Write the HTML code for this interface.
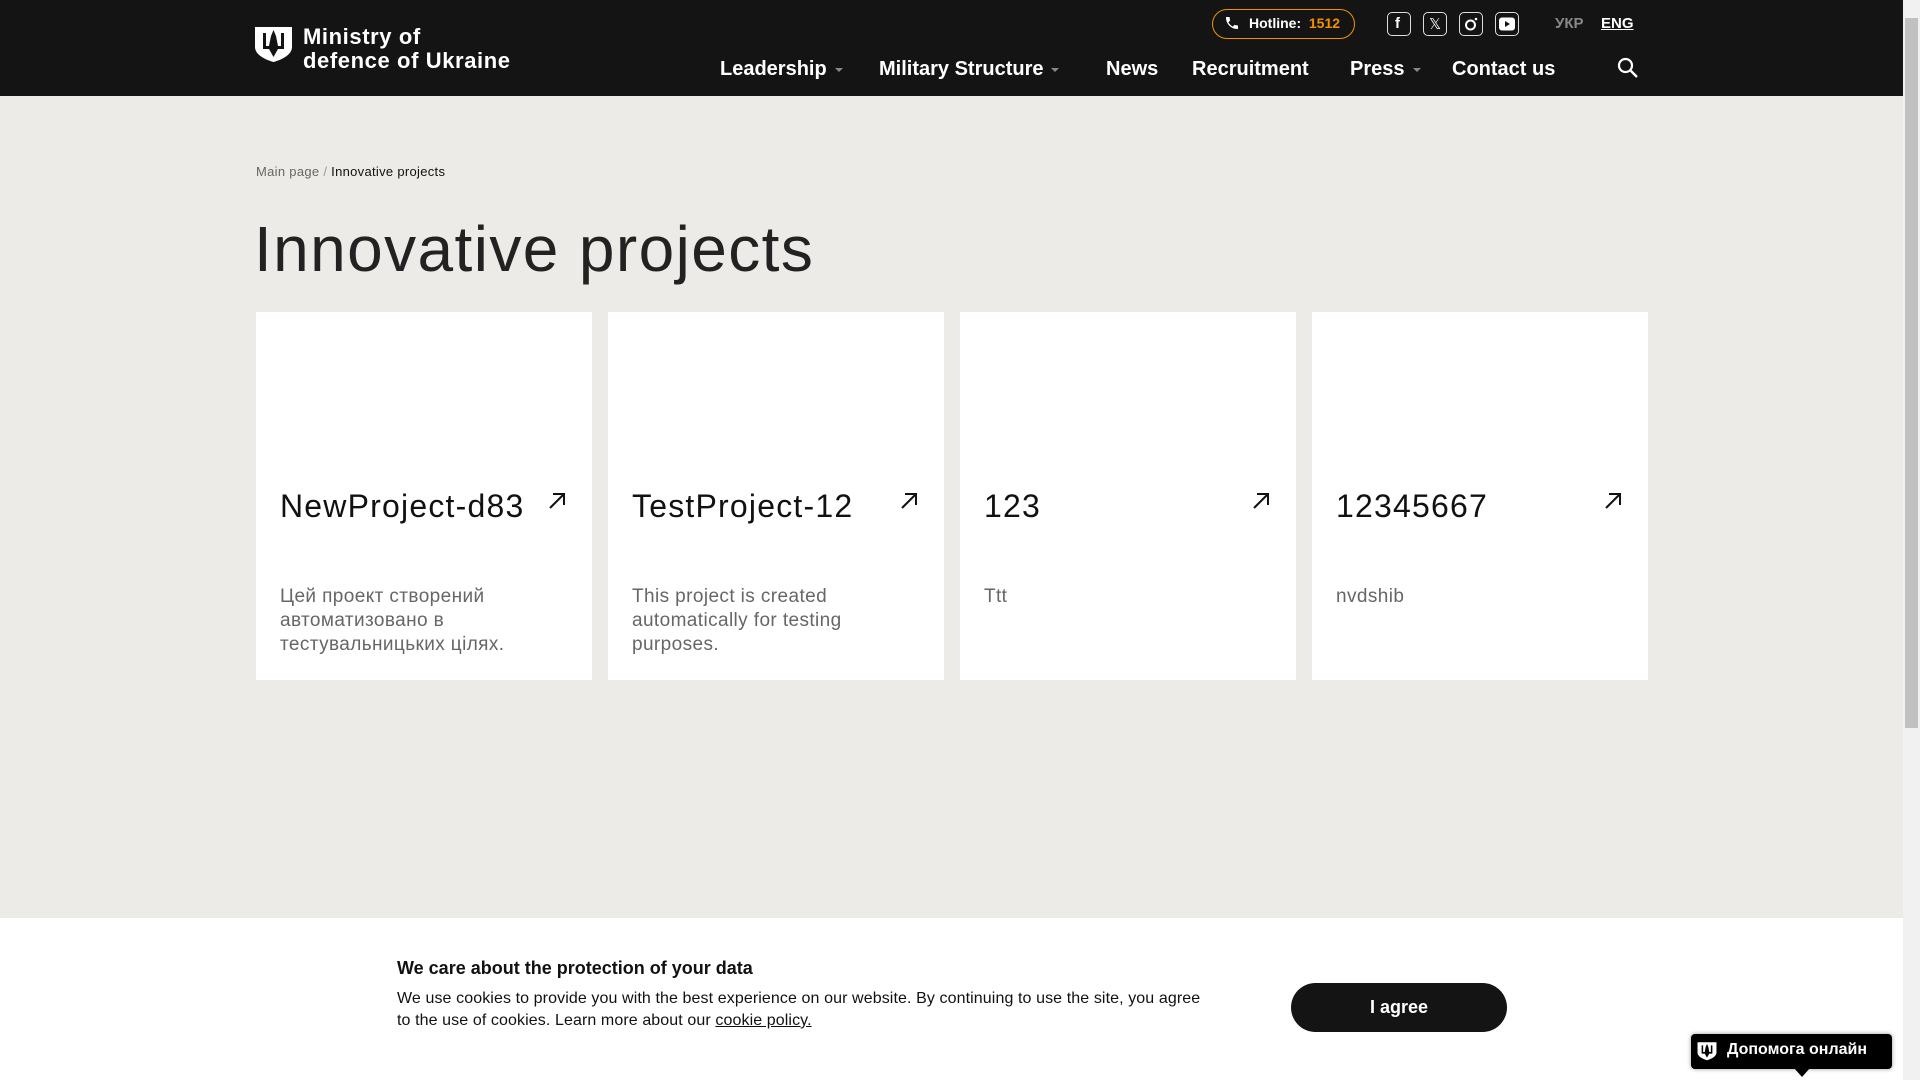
<!DOCTYPE html>
<html><head><meta charset="utf-8"><style>
*{margin:0;padding:0;box-sizing:border-box}
body{width:1920px;height:1080px;overflow:hidden;background:#edebe7;font-family:"Liberation Sans",sans-serif;position:relative;color:#1a1a1a}
.hdr{position:absolute;left:0;top:0;width:1903px;height:96px;background:#141414}
.abs{position:absolute}
.logo-t{left:303px;top:25px;color:#fff;font-weight:bold;font-size:22px;line-height:24px;letter-spacing:.6px}
.nav{top:58px;color:#fff;font-weight:bold;font-size:20px;white-space:nowrap}
.car{display:inline-block;width:0;height:0;border-left:4px solid transparent;border-right:4px solid transparent;border-top:4px solid #888;vertical-align:middle;margin-left:8px}
.pill{left:1212px;top:9px;width:143px;height:30px;border:1.5px solid #f29100;border-radius:15px;color:#fff;font-weight:bold;font-size:14px;line-height:27px;padding-left:36px}
.soc{top:12px;width:24px;height:24px;border:1.3px solid #ddd;border-radius:5px}
.card{top:312px;width:336px;height:368px;background:#fff}
.ct{position:absolute;left:24px;top:176px;font-size:32px;color:#111;letter-spacing:1.2px}
.cd{position:absolute;left:24px;top:273px;font-size:19px;line-height:24px;color:#666;width:300px;letter-spacing:.4px}
.arr{position:absolute;right:26px;top:180px}
.ck{left:0;top:918px;width:1903px;height:162px;background:#fff}
.sb{left:1903px;top:0;width:17px;height:1080px;background:#f1f1f1}
</style></head><body>
<div class="hdr"></div>
<svg class="abs" style="left:254px;top:26px" width="39" height="36" viewBox="0 0 39 36"><path d="M1 1H38V21C38 29 27 34 19.5 36C12 34 1 29 1 21Z" fill="#fff"/><path d="M9 7V23H15L19.5 31L24 23H30V7H27V20H24L22 10L19.5 4L17 10L15 20H12V7Z" fill="#141414"/></svg>
<div class="abs logo-t">Ministry of<br>defence of Ukraine</div>
<div class="abs nav" style="left:720px">Leadership<span class="car"></span></div>
<div class="abs nav" style="left:879px">Military Structure<span class="car"></span></div>
<div class="abs nav" style="left:1106px">News</div>
<div class="abs nav" style="left:1192px">Recruitment</div>
<div class="abs nav" style="left:1350px">Press<span class="car"></span></div>
<div class="abs nav" style="left:1452px">Contact us</div>
<svg class="abs" style="left:1617px;top:57px" width="22" height="22" viewBox="0 0 22 22"><circle cx="8.5" cy="8.5" r="6.5" stroke="#fff" stroke-width="2.2" fill="none"/><path d="M13 13L20 20" stroke="#fff" stroke-width="2.4"/></svg>
<div class="abs pill">Hotline:&nbsp; <span style="color:#f29100">1512</span></div>
<svg class="abs" style="left:1224px;top:15px" width="16" height="16" viewBox="0 0 24 24"><path d="M6.6 10.8c1.4 2.8 3.8 5.1 6.6 6.6l2.2-2.2c.3-.3.7-.4 1-.2 1.1.4 2.3.6 3.6.6.6 0 1 .4 1 1V20c0 .6-.4 1-1 1C10.6 21 3 13.4 3 4c0-.6.4-1 1-1h3.5c.6 0 1 .4 1 1 0 1.3.2 2.5.6 3.6.1.3 0 .7-.2 1z" fill="#fff"/></svg>
<div class="abs soc" style="left:1387px"><span style="position:absolute;left:7px;top:2px;color:#fff;font-weight:bold;font-size:15px">f</span></div>
<div class="abs soc" style="left:1423px"><span style="position:absolute;left:5px;top:2px;color:#fff;font-size:15px">𝕏</span></div>
<div class="abs soc" style="left:1459px"><svg width="22" height="22" viewBox="0 0 22 22"><circle cx="10.5" cy="12" r="4.5" stroke="#fff" stroke-width="2" fill="none"/><circle cx="16" cy="6" r="1.3" fill="#fff"/></svg></div>
<div class="abs soc" style="left:1495px"><svg width="22" height="22" viewBox="0 0 22 22"><rect x="3" y="4.5" width="16" height="13" rx="3" fill="#fff"/><path d="M9 8L14 11L9 14Z" fill="#141414"/></svg></div>
<div class="abs" style="left:1555px;top:15px;color:#888;font-weight:bold;font-size:15px">УКР</div>
<div class="abs" style="left:1601px;top:15px;color:#fff;font-weight:bold;font-size:15px;text-decoration:underline">ENG</div>

<div class="abs" style="left:256px;top:164px;font-size:13px;color:#666;letter-spacing:.3px">Main page <span style="color:#999">/</span> <span style="color:#111">Innovative projects</span></div>
<div class="abs" style="left:254px;top:212px;font-size:64px;color:#222;letter-spacing:1.4px">Innovative projects</div>

<div class="abs card" style="left:256px"><div class="ct">NewProject-d83</div><svg class="arr" width="18" height="18" viewBox="0 0 18 18"><path d="M2 16L16 2M5 2H16V13" stroke="#111" stroke-width="2" fill="none"/></svg><div class="cd">Цей проект створений автоматизовано в тестувальницьких цілях.</div></div>
<div class="abs card" style="left:608px"><div class="ct">TestProject-12</div><svg class="arr" width="18" height="18" viewBox="0 0 18 18"><path d="M2 16L16 2M5 2H16V13" stroke="#111" stroke-width="2" fill="none"/></svg><div class="cd">This project is created automatically for testing purposes.</div></div>
<div class="abs card" style="left:960px"><div class="ct">123</div><svg class="arr" width="18" height="18" viewBox="0 0 18 18"><path d="M2 16L16 2M5 2H16V13" stroke="#111" stroke-width="2" fill="none"/></svg><div class="cd">Ttt</div></div>
<div class="abs card" style="left:1312px"><div class="ct">12345667</div><svg class="arr" width="18" height="18" viewBox="0 0 18 18"><path d="M2 16L16 2M5 2H16V13" stroke="#111" stroke-width="2" fill="none"/></svg><div class="cd">nvdshib</div></div>

<div class="abs ck"></div>
<div class="abs" style="left:397px;top:958px;font-size:18px;font-weight:bold;color:#111">We care about the protection of your data</div>
<div class="abs" style="left:397px;top:988px;width:820px;font-size:16px;line-height:22px;color:#111;letter-spacing:.1px">We use cookies to provide you with the best experience on our website. By continuing to use the site, you agree to the use of cookies. Learn more about our <u>cookie policy.</u></div>
<div class="abs" style="left:1291px;top:983px;width:216px;height:49px;border-radius:25px;background:#141414;color:#fff;font-weight:bold;font-size:18px;text-align:center;line-height:49px">I agree</div>

<div class="abs" style="left:1691px;top:1034px;width:201px;height:35px;background:#000;border-radius:4px;box-shadow:0 0 4px rgba(0,0,0,.4)"></div>
<div class="abs" style="left:1794px;top:1068px;width:0;height:0;border-left:8px solid transparent;border-right:8px solid transparent;border-top:9px solid #000"></div>
<svg class="abs" style="left:1697px;top:1040px" width="20" height="22" viewBox="0 0 39 36"><path d="M1 1H38V21C38 29 27 34 19.5 36C12 34 1 29 1 21Z" fill="#fff"/><path d="M9 7V23H15L19.5 31L24 23H30V7H27V20H24L22 10L19.5 4L17 10L15 20H12V7Z" fill="#000"/></svg>
<div class="abs" style="left:1727px;top:1041px;color:#fff;font-weight:bold;font-size:16px">Допомога онлайн</div>

<div class="abs sb"><div style="position:absolute;left:2px;top:18px;width:13px;height:710px;background:#c1c1c1"></div></div>
</body></html>
